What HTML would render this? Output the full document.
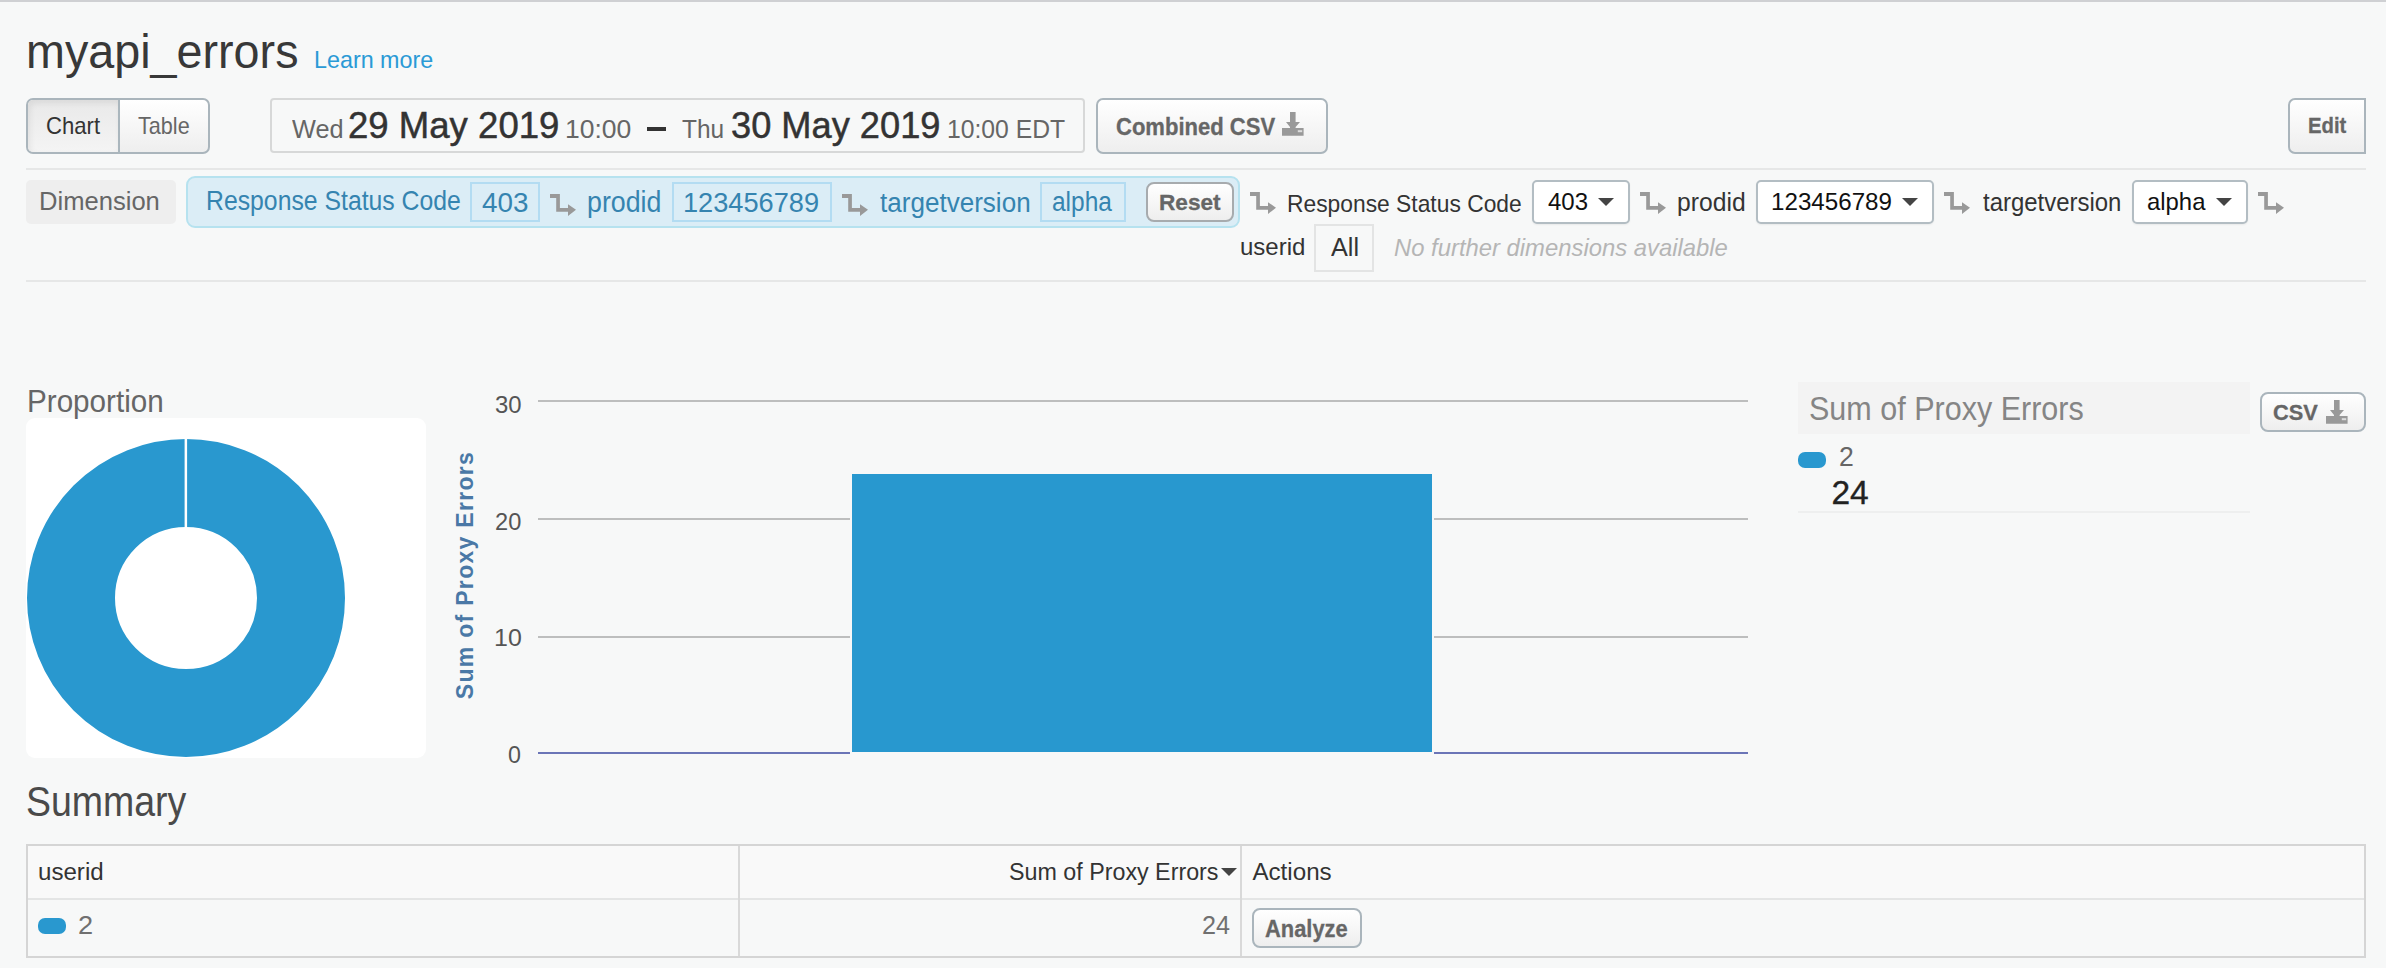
<!DOCTYPE html>
<html><head><meta charset="utf-8"><style>
html,body{margin:0;padding:0;width:2386px;height:968px;overflow:hidden;background:#f7f8f8;position:relative}
.b{position:absolute}
.ic{position:absolute;overflow:visible}
.t{position:absolute;font-family:"Liberation Sans",sans-serif;line-height:1;white-space:pre;transform-origin:0 0}
.btn{background:linear-gradient(#ffffff,#eeeeee);border:2px solid #aab5bc;box-sizing:border-box}
</style></head><body>
<div class="b" style="left:0;top:0;width:2386px;height:2px;background:#cfd0d3"></div>
<div class="b btn" style="left:26px;top:98px;width:184px;height:56px;border-radius:7px"></div>
<div class="b" style="left:28px;top:100px;width:90px;height:52px;border-radius:5px 0 0 5px;background:linear-gradient(#e9e9e9,#f4f4f4);box-shadow:inset 2px 3px 6px rgba(0,0,0,.07)"></div>
<div class="b" style="left:118px;top:98px;width:2px;height:56px;background:#aab6bd"></div>
<div class="b" style="left:270px;top:98px;width:815px;height:55px;border:2px solid #d7d8d8;border-radius:4px;box-sizing:border-box"></div>
<div class="b" style="left:647px;top:127px;width:19px;height:3.5px;background:#333"></div>
<div class="b btn" style="left:1096px;top:98px;width:232px;height:56px;border-radius:7px"></div>
<svg class="ic" style="left:1282px;top:112px" width="22" height="24" viewBox="0 0 22 24"><path d="M8 0H13.6V10H18L13.6 15V16H21.6V23.7H0V16H8V15L4 10H8Z" fill="#999"/><rect x="15.8" y="18.2" width="4.4" height="2" fill="#dcdcdc"/></svg>
<div class="b btn" style="left:2288px;top:98px;width:78px;height:56px;border-radius:7px 0 0 7px"></div>
<div class="b" style="left:26px;top:168px;width:2340px;height:2px;background:#e6e7e7"></div>
<div class="b" style="left:26px;top:180px;width:150px;height:44px;background:#eeeeee;border-radius:5px"></div>
<div class="b" style="left:186px;top:176px;width:1054px;height:52px;background:#dbedf6;border:2px solid #b6e2ef;border-radius:9px;box-sizing:border-box"></div>
<div class="b" style="left:470px;top:182px;width:70px;height:40px;border:2px solid #b3dcf2;box-sizing:border-box"></div>
<div class="b" style="left:672px;top:182px;width:160px;height:40px;border:2px solid #b3dcf2;box-sizing:border-box"></div>
<div class="b" style="left:1040px;top:182px;width:86px;height:40px;border:2px solid #b3dcf2;box-sizing:border-box"></div>
<div class="b btn" style="left:1146px;top:182px;width:88px;height:40px;border-radius:8px;border-color:#a7abae"></div>
<svg class="ic" style="left:550px;top:193.9px" width="26" height="22" viewBox="0 0 26 22"><path d="M0 0H9.9V13.9H18V10.2L26 15.8L18 21.9V17.7H6.2V4H0Z" fill="#999"/></svg>
<svg class="ic" style="left:842px;top:193.9px" width="26" height="22" viewBox="0 0 26 22"><path d="M0 0H9.9V13.9H18V10.2L26 15.8L18 21.9V17.7H6.2V4H0Z" fill="#999"/></svg>
<svg class="ic" style="left:1250px;top:191.8px" width="26" height="22" viewBox="0 0 26 22"><path d="M0 0H9.9V13.9H18V10.2L26 15.8L18 21.9V17.7H6.2V4H0Z" fill="#999"/></svg>
<svg class="ic" style="left:1640px;top:191.8px" width="26" height="22" viewBox="0 0 26 22"><path d="M0 0H9.9V13.9H18V10.2L26 15.8L18 21.9V17.7H6.2V4H0Z" fill="#999"/></svg>
<svg class="ic" style="left:1944px;top:191.8px" width="26" height="22" viewBox="0 0 26 22"><path d="M0 0H9.9V13.9H18V10.2L26 15.8L18 21.9V17.7H6.2V4H0Z" fill="#999"/></svg>
<svg class="ic" style="left:2258px;top:191.8px" width="26" height="22" viewBox="0 0 26 22"><path d="M0 0H9.9V13.9H18V10.2L26 15.8L18 21.9V17.7H6.2V4H0Z" fill="#999"/></svg>
<div class="b" style="left:1532px;top:180px;width:98px;height:44px;background:#fff;border:2px solid #b3bdc3;border-radius:5px;box-sizing:border-box;box-shadow:0 1px 2px rgba(0,0,0,.06)"></div>
<svg class="ic" style="left:1598px;top:198px" width="16" height="8" viewBox="0 0 16 8"><path d="M0 0H16L8 8Z" fill="#444"/></svg>
<div class="b" style="left:1756px;top:180px;width:178px;height:44px;background:#fff;border:2px solid #b3bdc3;border-radius:5px;box-sizing:border-box;box-shadow:0 1px 2px rgba(0,0,0,.06)"></div>
<svg class="ic" style="left:1902px;top:198px" width="16" height="8" viewBox="0 0 16 8"><path d="M0 0H16L8 8Z" fill="#444"/></svg>
<div class="b" style="left:2132px;top:180px;width:116px;height:44px;background:#fff;border:2px solid #b3bdc3;border-radius:5px;box-sizing:border-box;box-shadow:0 1px 2px rgba(0,0,0,.06)"></div>
<svg class="ic" style="left:2216px;top:198px" width="16" height="8" viewBox="0 0 16 8"><path d="M0 0H16L8 8Z" fill="#444"/></svg>
<div class="b" style="left:1314px;top:224px;width:60px;height:48px;border:2px solid #e3e4e4;box-sizing:border-box"></div>
<div class="b" style="left:26px;top:280px;width:2340px;height:2px;background:#e6e7e7"></div>
<div class="b" style="left:26px;top:418px;width:400px;height:340px;background:#fff;border-radius:9px"></div>
<svg class="ic" style="left:26px;top:438px" width="320" height="320" viewBox="0 0 320 320"><circle cx="160" cy="160" r="115" fill="none" stroke="#2998cf" stroke-width="88"/><rect x="158.6" y="0" width="2.5" height="90" fill="#fff"/></svg>
<div class="b" style="left:538px;top:400px;width:1210px;height:2px;background:#bdbebe"></div><div class="b" style="left:538px;top:518px;width:1210px;height:2px;background:#bdbebe"></div><div class="b" style="left:538px;top:636px;width:1210px;height:2px;background:#bdbebe"></div>
<div class="b" style="left:538px;top:752px;width:1210px;height:2px;background:#6b75b7"></div>
<div class="b" style="left:850px;top:472px;width:584px;height:282px;background:#f7f8f8"></div>
<div class="b" style="left:852px;top:474px;width:580px;height:278px;background:#2898cf"></div>
<div class="t" style="left:465px;top:575px;font-size:23px;font-weight:700;color:#4a78a6;transform:translate(-50%,-50%) rotate(-90deg);transform-origin:50% 50%;letter-spacing:1.3px">Sum of Proxy Errors</div>
<div class="b" style="left:1798px;top:382px;width:452px;height:52px;background:#f3f3f3"></div>
<div class="b btn" style="left:2260px;top:392px;width:106px;height:40px;border-radius:8px"></div>
<svg class="ic" style="left:2326px;top:400px" width="22" height="24" viewBox="0 0 22 24"><path d="M8 0H13.6V10H18L13.6 15V16H21.6V23.7H0V16H8V15L4 10H8Z" fill="#999"/><rect x="15.8" y="18.2" width="4.4" height="2" fill="#dcdcdc"/></svg>
<div class="b" style="left:1798px;top:452px;width:28px;height:16px;background:#2998cf;border-radius:7px"></div>
<div class="b" style="left:1798px;top:511px;width:452px;height:2px;background:#eeefef"></div>
<div class="b" style="left:26px;top:844px;width:2340px;height:114px;border:2px solid #d5d5d5;box-sizing:border-box;background:#f7f8f8"></div>
<div class="b" style="left:28px;top:846px;width:2336px;height:52px;background:#f9f9f9"></div>
<div class="b" style="left:28px;top:898px;width:2336px;height:2px;background:#e4e5e5"></div>
<div class="b" style="left:738px;top:846px;width:2px;height:110px;background:#d9d9d9"></div>
<div class="b" style="left:1240px;top:846px;width:2px;height:110px;background:#d9d9d9"></div>
<svg class="ic" style="left:1221px;top:868px" width="16" height="8" viewBox="0 0 16 8"><path d="M0 0H16L8 8Z" fill="#444"/></svg>
<div class="b" style="left:38px;top:918px;width:28px;height:16px;background:#2998cf;border-radius:7px"></div>
<div class="b btn" style="left:1252px;top:908px;width:110px;height:40px;border-radius:8px"></div>
<div class="t" style="left:25.6px;top:27px;font-size:49.0px;color:#383838;transform:scaleX(0.953)">myapi_errors</div>
<div class="t" style="left:314.4px;top:48px;font-size:24.8px;color:#2a9ad6;transform:scaleX(0.940)">Learn more</div>
<div class="t" style="left:45.7px;top:115px;font-size:23.6px;color:#333;transform:scaleX(0.937)">Chart</div>
<div class="t" style="left:138.0px;top:115px;font-size:23.6px;color:#666;transform:scaleX(0.916)">Table</div>
<div class="t" style="left:291.7px;top:116px;font-size:26.5px;color:#666;transform:scaleX(0.954)">Wed</div>
<div class="t" style="left:347.8px;top:107px;font-size:37.5px;color:#333;-webkit-text-stroke:0.5px #333;transform:scaleX(0.975)">29 May 2019</div>
<div class="t" style="left:565.0px;top:116px;font-size:26.1px;color:#666;transform:scaleX(1.016)">10:00</div>
<div class="t" style="left:681.9px;top:116px;font-size:26.5px;color:#666;transform:scaleX(0.923)">Thu</div>
<div class="t" style="left:730.6px;top:107px;font-size:37.5px;color:#333;-webkit-text-stroke:0.5px #333;transform:scaleX(0.966)">30 May 2019</div>
<div class="t" style="left:946.6px;top:116px;font-size:26.1px;color:#666;transform:scaleX(0.947)">10:00 EDT</div>
<div class="t" style="left:1115.8px;top:116px;font-size:23.2px;color:#666;font-weight:700;-webkit-text-stroke:0.3px #666;transform:scaleX(0.950)">Combined CSV</div>
<div class="t" style="left:2307.9px;top:114px;font-size:22.9px;color:#666;font-weight:700;-webkit-text-stroke:0.3px #666;transform:scaleX(0.886)">Edit</div>
<div class="t" style="left:39.4px;top:189px;font-size:25.9px;color:#666;transform:scaleX(0.988)">Dimension</div>
<div class="t" style="left:205.9px;top:187px;font-size:27.7px;color:#3584b0;transform:scaleX(0.895)">Response Status Code</div>
<div class="t" style="left:482.0px;top:189px;font-size:27.2px;color:#3584b0;transform:scaleX(1.023)">403</div>
<div class="t" style="left:587.4px;top:188px;font-size:28.8px;color:#3584b0;transform:scaleX(0.930)">prodid</div>
<div class="t" style="left:683.0px;top:189px;font-size:27.2px;color:#3584b0">123456789</div>
<div class="t" style="left:880.0px;top:190px;font-size:27.0px;color:#3584b0;transform:scaleX(0.965)">targetversion</div>
<div class="t" style="left:1051.6px;top:187px;font-size:28.4px;color:#3584b0;transform:scaleX(0.862)">alpha</div>
<div class="t" style="left:1158.7px;top:191px;font-size:22.9px;color:#666;font-weight:700;-webkit-text-stroke:0.3px #666;transform:scaleX(0.989)">Reset</div>
<div class="t" style="left:1287.1px;top:192px;font-size:24.6px;color:#333;transform:scaleX(0.928)">Response Status Code</div>
<div class="t" style="left:1548.0px;top:190px;font-size:24.8px;color:#111;transform:scaleX(0.968)">403</div>
<div class="t" style="left:1677.1px;top:189px;font-size:26.7px;color:#333;transform:scaleX(0.925)">prodid</div>
<div class="t" style="left:1771.4px;top:190px;font-size:24.8px;color:#111;transform:scaleX(0.975)">123456789</div>
<div class="t" style="left:1982.6px;top:189px;font-size:26.7px;color:#333;transform:scaleX(0.897)">targetversion</div>
<div class="t" style="left:2146.6px;top:190px;font-size:24.8px;color:#111;transform:scaleX(0.963)">alpha</div>
<div class="t" style="left:1239.5px;top:236px;font-size:23.2px;color:#333;transform:scaleX(1.036)">userid</div>
<div class="t" style="left:1330.7px;top:235px;font-size:25.4px;color:#333;transform:scaleX(0.993)">All</div>
<div class="t" style="left:1393.6px;top:237px;font-size:23.6px;color:#b5b5b5;font-style:italic;transform:scaleX(1.010)">No further dimensions available</div>
<div class="t" style="left:26.8px;top:386px;font-size:31.3px;color:#666;transform:scaleX(0.947)">Proportion</div>
<div class="t" style="left:495.0px;top:393px;font-size:24.1px;color:#555;transform:scaleX(0.992)">30</div>
<div class="t" style="left:495.0px;top:510px;font-size:23.8px;color:#555;transform:scaleX(0.992)">20</div>
<div class="t" style="left:493.9px;top:626px;font-size:24.2px;color:#555;transform:scaleX(1.033)">10</div>
<div class="t" style="left:508.2px;top:743px;font-size:24.1px;color:#555;transform:scaleX(0.967)">0</div>
<div class="t" style="left:1809.1px;top:393px;font-size:32.9px;color:#858585;transform:scaleX(0.928)">Sum of Proxy Errors</div>
<div class="t" style="left:2273.0px;top:401px;font-size:22.9px;color:#666;font-weight:700;-webkit-text-stroke:0.3px #666;transform:scaleX(0.952)">CSV</div>
<div class="t" style="left:1839.0px;top:444px;font-size:27.0px;color:#666;transform:scaleX(0.985)">2</div>
<div class="t" style="left:1831.4px;top:476px;font-size:33.5px;color:#222;-webkit-text-stroke:0.35px #222">24</div>
<div class="t" style="left:25.7px;top:781px;font-size:41.6px;color:#4a4a4a;transform:scaleX(0.901)">Summary</div>
<div class="t" style="left:37.5px;top:860px;font-size:24.4px;color:#333;transform:scaleX(0.988)">userid</div>
<div class="t" style="left:1008.6px;top:860px;font-size:24.2px;color:#333;transform:scaleX(0.962)">Sum of Proxy Errors</div>
<div class="t" style="left:1252.4px;top:860px;font-size:24.2px;color:#333">Actions</div>
<div class="t" style="left:77.8px;top:913px;font-size:25.9px;color:#707070;transform:scaleX(1.050)">2</div>
<div class="t" style="left:1202.0px;top:913px;font-size:25.9px;color:#707070;transform:scaleX(0.974)">24</div>
<div class="t" style="left:1265.1px;top:918px;font-size:23.2px;color:#666;font-weight:700;-webkit-text-stroke:0.3px #666;transform:scaleX(0.944)">Analyze</div>
</body></html>
